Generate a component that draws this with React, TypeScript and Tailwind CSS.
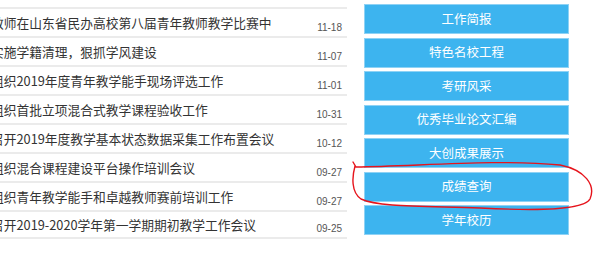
import React from 'react';

const news = [
  { title: '教师在山东省民办高校第八届青年教师教学比赛中', date: '11-18' },
  { title: '实施学籍清理，狠抓学风建设', date: '11-07' },
  { title: '组织2019年度青年教学能手现场评选工作', date: '11-01' },
  { title: '组织首批立项混合式教学课程验收工作', date: '10-31' },
  { title: '召开2019年度教学基本状态数据采集工作布置会议', date: '10-12' },
  { title: '组织混合课程建设平台操作培训会议', date: '09-27' },
  { title: '组织青年教学能手和卓越教师赛前培训工作', date: '09-27' },
  { title: '召开2019-2020学年第一学期期初教学工作会议', date: '09-25' },
];

const links = ['工作简报', '特色名校工程', '考研风采', '优秀毕业论文汇编', '大创成果展示', '成绩查询', '学年校历'];

const App: React.FC = () => {
  return (
    <div className="relative w-[600px] h-[273px] overflow-hidden bg-white flex font-['Noto_Sans_CJK_SC',sans-serif]">
      {/* news list */}
      <div className="w-[347px] pt-[7px]">
        {news.map((n, i) => (
          <div
            key={i}
            className={
              'h-[29px] flex border-t-2 border-[#ebebeb] pr-[5px] ' +
              (i === news.length - 1 ? 'border-b-2' : '')
            }
          >
            <span className="flex-1 -ml-[9px] pt-[1px] flex items-center whitespace-nowrap text-[12.75px] text-[#333]">
              {n.title}
            </span>
            <span className="self-end pb-[1px] text-[10px] leading-[15px] text-[#555] font-['Liberation_Sans',sans-serif]">
              {n.date}
            </span>
          </div>
        ))}
      </div>

      {/* quick links */}
      <div className="ml-[17px] pt-[4px] flex flex-col gap-[3.5px]">
        {links.map((l) => (
          <div
            key={l}
            className="w-[205px] h-[30px] flex items-center justify-center bg-[#3db4ef] border border-[#8ed2f5] text-white text-[12.5px]"
          >
            {l}
          </div>
        ))}
      </div>

      {/* hand-drawn annotation */}
      <svg className="absolute inset-0 pointer-events-none" width="600" height="273" viewBox="0 0 600 273">
        <path
          d="M353,162 L356,167 C420,166 500,159 560,165 C585,170 596,185 590,199 C584,210 540,211 480,208 C420,206 378,207 361,199 C351,192 352,177 355,166"
          fill="none"
          stroke="#e6141c"
          strokeWidth="1.4"
          strokeLinecap="round"
        />
      </svg>
    </div>
  );
};

export default App;
